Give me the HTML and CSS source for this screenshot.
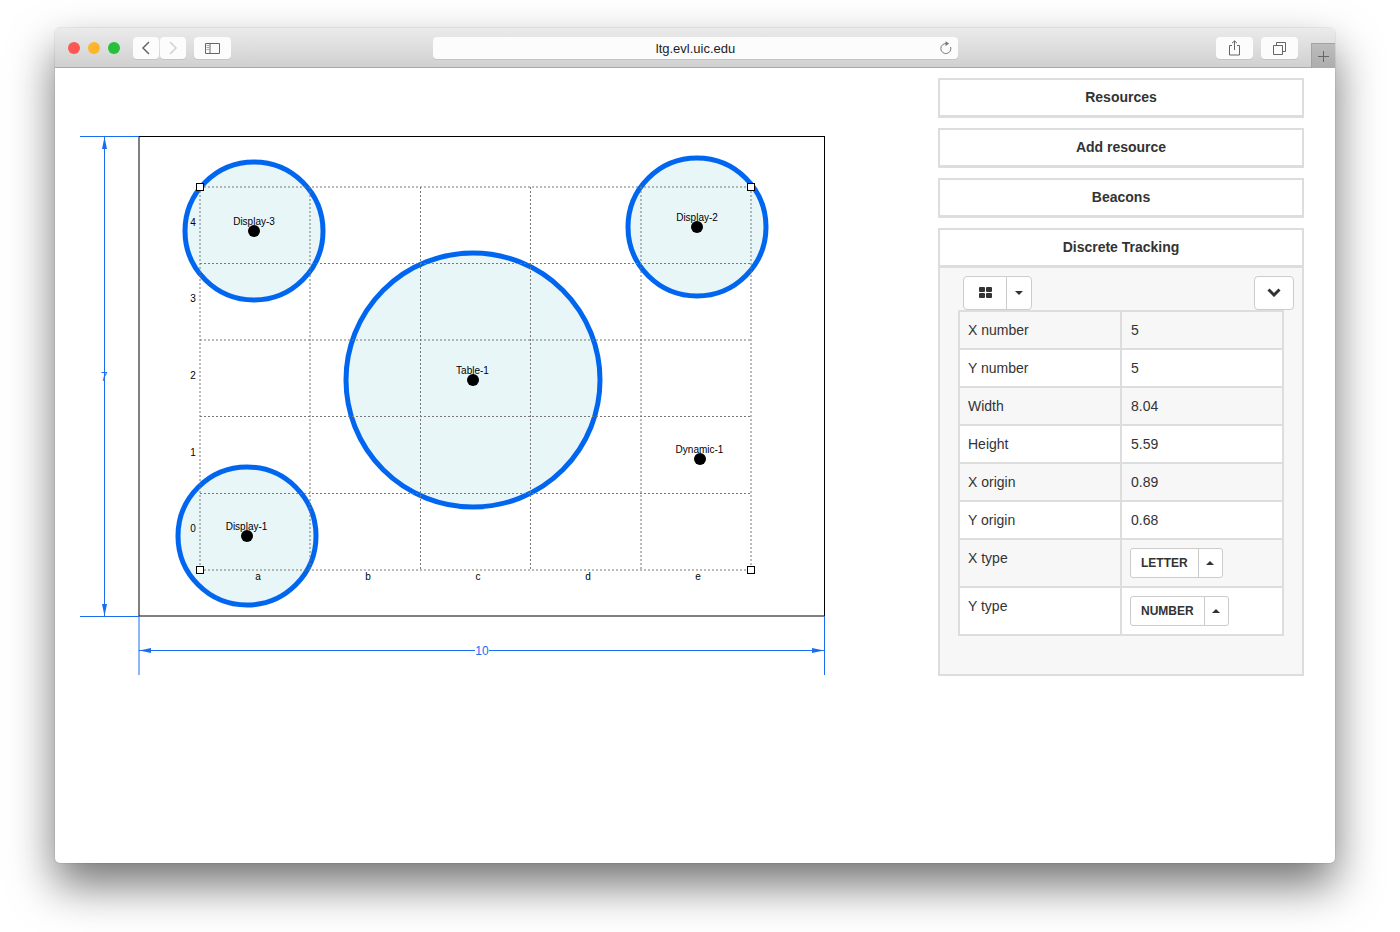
FILE: index.html

```html
<!DOCTYPE html>
<html lang="en">
<head>
    <meta charset="UTF-8">
    <title>ltg.evl.uic.edu</title>
    <link rel="stylesheet" href="styles.css">
</head>
<body>
    <div class="window">
        <div class="toolbar">
            <div class="lights">
                <span class="light red"></span>
                <span class="light yellow"></span>
                <span class="light green"></span>
            </div>
            <div class="nav">
                <button class="tool nav-btn">
                    <svg width="10" height="14" viewBox="0 0 10 14"><path d="M8 1 L2 7 L8 13" fill="none" stroke="#666" stroke-width="1.5"/></svg>
                </button>
                <button class="tool nav-btn">
                    <svg width="10" height="14" viewBox="0 0 10 14"><path d="M2 1 L8 7 L2 13" fill="none" stroke="#d2d2d2" stroke-width="1.5"/></svg>
                </button>
            </div>
            <button class="tool wide sidebar-btn">
                <svg width="15" height="11" viewBox="0 0 15 11"><path d="M.5 .5 H14.5 V10.5 H.5 Z M5 .5 V10.5" fill="none" stroke="#666"/><path d="M1.5 2.5 H4 M1.5 4.5 H4 M1.5 6.5 H4" stroke="#aaa"/></svg>
            </button>
            <div class="url">
                <span>ltg.evl.uic.edu</span>
                <svg class="reload" width="13" height="14" viewBox="0 0 13 14"><path d="M7.5 2.6 A5 5 0 1 0 11.6 6" fill="none" stroke="#777"/><path d="M6.5 .2 L10.2 2.6 L6.5 5 Z" fill="#777"/></svg>
            </div>
            <button class="tool wide share-btn">
                <svg width="13" height="16" viewBox="0 0 13 16"><path d="M4 5.5 H1.5 V15 H11.5 V5.5 H9 M6.5 10 V1 M4 3.2 L6.5 .8 L9 3.2" fill="none" stroke="#666"/></svg>
            </button>
            <button class="tool wide tabs-btn">
                <svg width="13" height="13" viewBox="0 0 13 13"><path d="M.5 3.5 H9.5 V12.5 H.5 Z M3.5 3.5 V.5 H12.5 V9.5 H9.5" fill="none" stroke="#666"/></svg>
            </button>
            <div class="new-tab">
                <svg width="11" height="11" viewBox="0 0 11 11"><path d="M5.5 0 V11 M0 5.5 H11" stroke="#666"/></svg>
            </div>
        </div>

        <div class="content">
            <div class="stage">
                <svg class="plan" width="883" height="795" viewBox="55 68 883 795">
                    <rect class="room" x="139" y="136.5" width="685.5" height="479.5"/>

                    <circle class="zone" cx="254" cy="231" r="69"/>
                    <circle class="zone" cx="697" cy="227" r="69"/>
                    <circle class="zone" cx="473" cy="380" r="127"/>
                    <circle class="zone" cx="247" cy="536" r="69"/>

                    <path class="grid-line" d="M310 187 V570 M420.5 187 V570 M530.5 187 V570 M641 187 V570 M200 187 V570 M751 187 V570"/>
                    <path class="grid-line" d="M200 187 H751 M200 263.5 H751 M200 340 H751 M200 416.5 H751 M200 493.5 H751 M200 570 H751"/>

                    <rect class="handle" x="196.5" y="183.5" width="7" height="7"/>
                    <rect class="handle" x="747.5" y="183.5" width="7" height="7"/>
                    <rect class="handle" x="196.5" y="566.5" width="7" height="7"/>
                    <rect class="handle" x="747.5" y="566.5" width="7" height="7"/>

                    <text class="tick" x="193" y="226">4</text>
                    <text class="tick" x="193" y="302">3</text>
                    <text class="tick" x="193" y="379">2</text>
                    <text class="tick" x="193" y="456">1</text>
                    <text class="tick" x="193" y="532">0</text>
                    <text class="tick" x="258" y="580">a</text>
                    <text class="tick" x="368" y="580">b</text>
                    <text class="tick" x="478" y="580">c</text>
                    <text class="tick" x="588" y="580">d</text>
                    <text class="tick" x="698" y="580">e</text>

                    <circle class="dot" cx="254" cy="231" r="6"/>
                    <circle class="dot" cx="697" cy="227" r="6"/>
                    <circle class="dot" cx="473" cy="380" r="6"/>
                    <circle class="dot" cx="247" cy="536" r="6"/>
                    <circle class="dot" cx="700" cy="459" r="6"/>
                    <text class="label" x="254" y="225">Display-3</text>
                    <text class="label" x="697" y="221">Display-2</text>
                    <text class="label" x="472.5" y="374">Table-1</text>
                    <text class="label" x="246.5" y="530">Display-1</text>
                    <text class="label" x="699.5" y="453">Dynamic-1</text>

                    <path class="dim" d="M80 136.5 H139 M80 616.5 H139 M104.5 137 V616 M139 616 V675 M824.5 616 V675 M139 650.5 H475 M489 650.5 H824"/>
                    <path class="arrow" d="M104.5 137 L102 149 H107 Z M104.5 616 L102 604 H107 Z M139.5 650.5 L151 648 V653 Z M824 650.5 L812 648 V653 Z"/>
                    <text class="dim-label" x="104" y="381">7</text>
                    <text class="dim-label" x="482" y="655">10</text>
                </svg>
            </div>

            <div class="sidebar">
                <div class="panel"><div class="panel-title">Resources</div></div>
                <div class="panel"><div class="panel-title">Add resource</div></div>
                <div class="panel"><div class="panel-title">Beacons</div></div>
                <div class="panel panel-open">
                    <div class="panel-title">Discrete Tracking</div>
                    <div class="panel-body">
                        <div class="controls">
                            <div class="btn-group">
                                <button class="btn btn-main">
                                    <svg class="btn-icon" width="13" height="11" viewBox="0 0 13 11"><path d="M1 0 H5 Q6 0 6 1 V4 Q6 5 5 5 H1 Q0 5 0 4 V1 Q0 0 1 0 Z M8 0 H12 Q13 0 13 1 V4 Q13 5 12 5 H8 Q7 5 7 4 V1 Q7 0 8 0 Z M1 6 H5 Q6 6 6 7 V10 Q6 11 5 11 H1 Q0 11 0 10 V7 Q0 6 1 6 Z M8 6 H12 Q13 6 13 7 V10 Q13 11 12 11 H8 Q7 11 7 10 V7 Q7 6 8 6 Z" fill="#333"/></svg>
                                </button>
                                <button class="btn btn-caret"><span class="caret"></span></button>
                            </div>
                            <button class="btn btn-chevron">
                                <svg class="btn-icon" width="14" height="9" viewBox="0 0 14 9"><path d="M1.5 1.5 L7 7 L12.5 1.5" fill="none" stroke="#333" stroke-width="3"/></svg>
                            </button>
                        </div>
                        <table class="props">
                            <tr><td>X number</td><td>5</td></tr>
                            <tr><td>Y number</td><td>5</td></tr>
                            <tr><td>Width</td><td>8.04</td></tr>
                            <tr><td>Height</td><td>5.59</td></tr>
                            <tr><td>X origin</td><td>0.89</td></tr>
                            <tr><td>Y origin</td><td>0.68</td></tr>
                            <tr class="tall">
                                <td>X type</td>
                                <td>
                                    <div class="select">
                                        <span class="select-value">LETTER</span>
                                        <span class="select-caret"><span class="caret up"></span></span>
                                    </div>
                                </td>
                            </tr>
                            <tr class="tall">
                                <td>Y type</td>
                                <td>
                                    <div class="select">
                                        <span class="select-value">NUMBER</span>
                                        <span class="select-caret"><span class="caret up"></span></span>
                                    </div>
                                </td>
                            </tr>
                        </table>
                    </div>
                </div>
            </div>
        </div>
    </div>
</body>
</html>
```

FILE: styles.css

```css
* {
    box-sizing: border-box;
}

html, body {
    height: 100%;
}

body {
    margin: 0;
    background-color: #fff;
    font-family: "Liberation Sans", Arial, sans-serif;
    color: #333;
    overflow: hidden;
}

.window {
    width: 1280px;
    height: 835px;
    margin: 28px 0 0 55px;
    background-color: #fff;
    border-radius: 5px;
    box-shadow: 0 22px 45px rgba(0, 0, 0, 0.55), 0 0 0 1px rgba(0, 0, 0, 0.06);
}

/* browser chrome */
.toolbar {
    display: flex;
    height: 40px;
    padding-top: 9px;
    background: linear-gradient(#ebebeb, #d0d0d0);
    border-bottom: 1px solid #a9a9a9;
    border-radius: 5px 5px 0 0;
}

.lights {
    display: flex;
    gap: 8px;
    margin: 5px 0 0 13px;
}

.light {
    width: 12px;
    height: 12px;
    border-radius: 50%;
}

.red { background-color: #fc5753; }
.yellow { background-color: #fdb52a; }
.green { background-color: #27c03a; }

.nav {
    display: flex;
    gap: 1px;
    margin-left: 13px;
}

.tool {
    display: flex;
    align-items: center;
    justify-content: center;
    height: 22px;
    padding: 0;
    border: none;
    border-radius: 4px;
    background-color: #fcfcfc;
    box-shadow: 0 1px 0 #c4c4c4;
}

.nav-btn {
    width: 26px;
}

.wide {
    width: 37px;
}

.sidebar-btn {
    margin-left: 8px;
}

.url {
    position: relative;
    width: 525px;
    height: 22px;
    margin-left: 202px;
    background-color: #fcfcfc;
    border-radius: 4px;
    box-shadow: 0 1px 0 #c4c4c4;
    font-size: 13px;
    line-height: 24px;
    text-align: center;
    color: #222;
}

.reload {
    position: absolute;
    top: 4px;
    right: 6px;
}

.share-btn {
    margin-left: 258px;
}

.tabs-btn {
    margin-left: 8px;
}

.new-tab {
    display: flex;
    align-items: center;
    justify-content: center;
    width: 24px;
    height: 25px;
    margin: 6px 0 0 13px;
    background: linear-gradient(#bcbcbc, #adadad);
    border: 1px solid #a3a3a3;
    border-right: none;
    border-bottom: none;
}

/* page */
.content {
    display: flex;
}

.stage {
    width: 883px;
}

.plan {
    display: block;
}

.room {
    fill: #fff;
    stroke: #000;
    stroke-width: 1;
}

.grid-line {
    fill: none;
    stroke: #777;
    stroke-width: 1;
    stroke-dasharray: 2 2;
}

.zone {
    fill: #e8f6f8;
    stroke: #0066f0;
    stroke-width: 5;
}

.handle {
    fill: #fff;
    stroke: #000;
    stroke-width: 1;
}

.dot {
    fill: #000;
}

.tick, .label {
    font-size: 10px;
    text-anchor: middle;
    fill: #000;
}

.dim {
    fill: none;
    stroke: #1a6cf0;
    stroke-width: 1;
}

.arrow {
    fill: #1a6cf0;
}

.dim-label {
    font-size: 12px;
    text-anchor: middle;
    fill: #1a6cf0;
}

.sidebar {
    display: flex;
    flex-direction: column;
    gap: 10px;
    width: 366px;
    margin-top: 10px;
}

.panel {
    border: 2px solid #ddd;
    border-bottom-width: 3px;
    background-color: #fff;
}

.panel-open {
    border-bottom-width: 2px;
}

.panel-title {
    height: 35px;
    font-size: 14px;
    font-weight: bold;
    line-height: 34px;
    text-align: center;
}

.panel-body {
    padding: 8px 8px 38px 18px;
    background-color: #f7f7f7;
    border-top: 3px solid #ddd;
}

.controls {
    display: flex;
    justify-content: space-between;
    padding-left: 5px;
}

.btn-group {
    display: flex;
}

.btn {
    display: flex;
    align-items: center;
    justify-content: center;
    height: 34px;
    padding: 0;
    background-color: #fff;
    border: 1px solid #ccc;
    border-radius: 4px;
}

.btn-icon {
    margin-bottom: 2px;
}

.btn-main {
    width: 44px;
    border-radius: 4px 0 0 4px;
}

.btn-caret {
    width: 26px;
    margin-left: -1px;
    border-radius: 0 4px 4px 0;
}

.btn-chevron {
    width: 40px;
}

.caret {
    width: 0;
    height: 0;
    border-top: 4px solid #333;
    border-left: 4px solid transparent;
    border-right: 4px solid transparent;
}

.caret.up {
    border-top: none;
    border-bottom: 4px solid #333;
}

.props {
    width: 326px;
    border-collapse: collapse;
    table-layout: fixed;
    font-size: 14px;
    line-height: 20px;
}

.props td {
    height: 38px;
    padding: 8px;
    border: 2px solid #ddd;
    vertical-align: top;
    background-color: #fff;
}

.props td:first-child {
    width: 162px;
}

.props td + td {
    padding-left: 9px;
}

.props tr:nth-child(odd) td {
    background-color: #f7f7f7;
}

.props .tall td {
    height: 48px;
}

.select {
    display: flex;
    width: fit-content;
    height: 30px;
    margin-left: -1px;
    background-color: #fff;
    border: 1px solid #ccc;
    border-radius: 3px;
    font-size: 12px;
    font-weight: bold;
    line-height: 28px;
}

.select-value {
    padding: 0 10px;
}

.select-caret {
    display: flex;
    align-items: center;
    justify-content: center;
    width: 24px;
    border-left: 1px solid #ccc;
}
```
